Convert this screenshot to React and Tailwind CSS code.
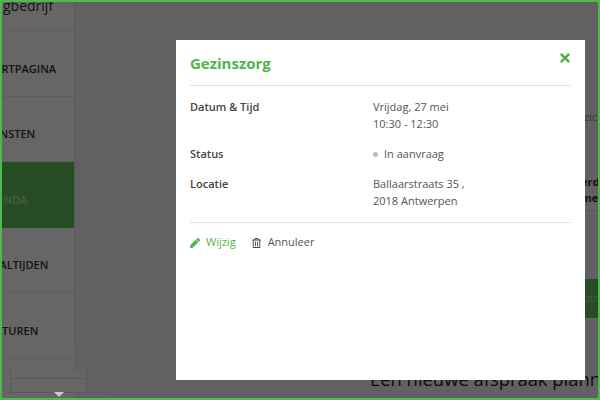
import React from "react";
import { FaPen, FaTimes, FaRegTrashAlt } from "react-icons/fa";

const menu = [
  { label: "STARTPAGINA" },
  { label: "DIENSTEN" },
  { label: "AGENDA", active: true },
  { label: "MAALTIJDEN" },
  { label: "FACTUREN" },
];

const Row = ({ label, children, className }) => (
  <div className={`flex ${className}`}>
    <div className="w-[183px] font-semibold text-[#444]">{label}</div>
    <div className="text-[#555]">{children}</div>
  </div>
);

const App = () => {
  return (
    <div className="relative flex h-[400px] w-[600px] overflow-hidden bg-[#f2f2f2] font-['Open_Sans',sans-serif] text-[11px] leading-[16.5px]">
      {/* Sidebar */}
      <aside className="h-full w-[74px] shrink-0 overflow-hidden bg-white shadow-[1px_0_2px_rgba(0,0,0,0.08)]">
        <div className="flex h-[31px] items-end border-b border-[#ececec] pb-[14px] pl-[3px] text-[14px] leading-[20px] text-[#333]">
          gbedrijf
        </div>
        {menu.map((item) => (
          <div
            key={item.label}
            className={`flex h-[65.5px] items-center whitespace-nowrap pt-[11px] font-semibold ${
              item.active ? "bg-[#5fbf5a] text-[#b9dcb6]" : "border-b border-[#ececec] text-[#333]"
            }`}
          >
            <span className="-ml-[18px]">{item.label}</span>
          </div>
        ))}
      </aside>

      {/* Page behind the modal */}
      <main className="flex min-w-0 flex-1 flex-col">
        <div className="ml-[487px] mt-[109px] whitespace-nowrap text-[#4cb648]">overzicht</div>
        <div className="ml-[507px] mt-[48px] w-[40px] whitespace-nowrap border-b border-[#ddd] pb-[3px] font-bold text-[#333]">
          <div>erdag</div>
          <div>meer</div>
        </div>
        <div className="ml-[500px] mt-[68px] flex h-[40px] items-center bg-[#5fbf5a] pl-[11px] text-[#b9dcb6]">zin</div>
        <div className="mt-[28px] h-[55px] bg-[#eef2f5] pl-[296px]">
          <div className="mt-[21px] whitespace-nowrap text-[18.4px] leading-[24px] text-[#222]">Een nieuwe afspraak plannen</div>
        </div>
      </main>

      {/* Overlay */}
      <div className="absolute inset-0 bg-black/60" />

      {/* Collapsed widget at the bottom of the sidebar */}
      <div className="absolute left-[10px] top-[370px] h-[22px] w-[77px] border-l border-r border-[#5a5a5a] bg-[#666]">
        <div className="mt-[8px] border-t border-[#5a5a5a]" />
      </div>
      <div className="absolute left-[10px] top-[392px] w-[97px] border-t border-[#5a5a5a]" />
      <div className="absolute left-[54px] top-[392px] h-0 w-0 border-x-[5px] border-t-[5px] border-x-transparent border-t-[#c9c9c9]" />

      {/* Modal */}
      <div className="absolute left-[176px] top-[40px] h-[340px] w-[409px] bg-white px-[14px]">
        <div className="flex h-[46px] items-start justify-between border-b border-[#e2e2e2]">
          <h2 className="mt-[12px] text-[15px] font-bold leading-[22px] text-[#4cb648]">Gezinszorg</h2>
          <FaTimes className="mt-[11px] h-[14px] w-[12px] text-[#4cb648]" />
        </div>
        <Row label="Datum & Tijd" className="mt-[13px]">
          <div>Vrijdag, 27 mei</div>
          <div>10:30 - 12:30</div>
        </Row>
        <Row label="Status" className="mt-[14px]">
          <div className="flex items-center gap-[6px]">
            <span className="h-[5px] w-[5px] rounded-full bg-[#bbb]" />
            In aanvraag
          </div>
        </Row>
        <Row label="Locatie" className="mt-[13.5px]">
          <div>Ballaarstraats 35 ,</div>
          <div>2018 Antwerpen</div>
        </Row>
        <div className="mt-[13px] flex h-[40px] items-center gap-[16px] border-t border-[#e2e2e2]">
          <a className="flex items-center gap-[6px] text-[#4cb648]">
            <FaPen className="h-[10px] w-[10px]" />
            Wijzig
          </a>
          <a className="flex items-center gap-[7px] text-[#555]">
            <FaRegTrashAlt className="h-[10px] w-[9px] text-[#444]" />
            Annuleer
          </a>
        </div>
      </div>

      {/* Green frame */}
      <div className="pointer-events-none absolute inset-0 border-2 border-[#4fb84f]" />
    </div>
  );
};

export default App;
